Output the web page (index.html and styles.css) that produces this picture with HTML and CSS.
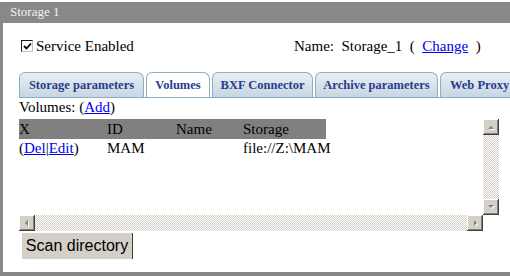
FILE: index.html
```html
<!DOCTYPE html>
<html>
<head>
<meta charset="utf-8">
<link rel="stylesheet" href="styles.css">
</head>
<body>
<div class="panel">
  <div class="titlebar">Storage 1</div>
  <div class="content">
    <div class="toprow">
      <div class="svc"><span class="cb"><svg width="9" height="9" viewBox="0 0 9 9"><path d="M1 4 L3.5 6.5 L8 1.5" fill="none" stroke="#000" stroke-width="1.8"/></svg></span>Service Enabled</div>
      <div class="name">Name:&nbsp; Storage_1&nbsp; (&nbsp; <a href="#">Change</a>&nbsp; )</div>
    </div>
    <div class="tabs">
      <div class="tab t1">Storage parameters</div>
      <div class="tab t2 active">Volumes</div>
      <div class="tab t3">BXF Connector</div>
      <div class="tab t4">Archive parameters</div>
      <div class="tab t5">Web Proxy</div>
    </div>
    <div class="vol">Volumes: (<a href="#">Add</a>)</div>
    <div class="scroller">
      <div class="view">
        <table class="grid">
          <colgroup><col class="c1"><col class="c2"><col class="c3"><col class="c4"></colgroup>
          <tr class="head"><td>X</td><td>ID</td><td>Name</td><td>Storage</td></tr>
          <tr><td>(<a href="#">Del</a>|<a href="#">Edit</a>)</td><td>MAM</td><td></td><td>file://Z:\MAM</td></tr>
        </table>
      </div>
      <div class="vbar">
        <div class="sbtn"><svg width="16" height="16" viewBox="0 0 16 16"><polygon points="5,10 11,10 8,7" fill="#fff" transform="translate(1,1)"/><polygon points="5,10 11,10 8,7" fill="#808080"/></svg></div>
        <div class="track"></div>
        <div class="sbtn"><svg width="16" height="16" viewBox="0 0 16 16"><polygon points="5,6 11,6 8,9" fill="#fff" transform="translate(1,1)"/><polygon points="5,6 11,6 8,9" fill="#808080"/></svg></div>
      </div>
      <div class="hbar">
        <div class="sbtn"><svg width="16" height="16" viewBox="0 0 16 16"><polygon points="9,5 9,11 6,8" fill="#fff" transform="translate(1,1)"/><polygon points="9,5 9,11 6,8" fill="#808080"/></svg></div>
        <div class="track"></div>
        <div class="sbtn"><svg width="16" height="16" viewBox="0 0 16 16"><polygon points="7,5 7,11 10,8" fill="#fff" transform="translate(1,1)"/><polygon points="7,5 7,11 10,8" fill="#808080"/></svg></div>
      </div>
      <div class="corner"></div>
    </div>
    <button class="scan">Scan directory</button>
  </div>
</div>
</body>
</html>
```

FILE: styles.css
```css
html, body {
  margin: 0;
  padding: 0;
  background: #fff;
}
body {
  padding-top: 2px;
  font-family: "Liberation Serif", "Times New Roman", serif;
  font-size: 15px;
  color: #000;
  overflow: hidden;
}
a {
  color: #0000ee;
  text-decoration: underline;
}
.panel {
  width: 507px;
  height: 270px;
  border-left: 3px solid #878787;
  border-bottom: 4px solid #878787;
  display: flex;
  flex-direction: column;
  overflow: hidden;
}
.titlebar {
  flex: none;
  height: 21px;
  background: #888888;
  color: #f2f2f2;
  font-size: 13px;
  line-height: 20px;
  padding-left: 7px;
}
.content {
  padding-left: 16px;
  display: flex;
  flex-direction: column;
  align-items: flex-start;
}
.toprow {
  margin-top: 14px;
  display: grid;
  grid-template-columns: 275px auto;
  line-height: 18px;
  height: 18px;
}
.svc {
  display: flex;
  align-items: center;
}
.cb {
  box-sizing: border-box;
  width: 12px;
  height: 12px;
  margin: 0 3px 0 2px;
  border: 1px solid #1a1a1a;
  border-right-color: #c0c0c0;
  border-bottom-color: #c0c0c0;
  background: #fff;
  display: flex;
  align-items: center;
  justify-content: center;
}
.cb svg { display: block; }
.tabs {
  margin-top: 17px;
  display: flex;
  gap: 2px;
  width: 491px;
  height: 26px;
  border-bottom: 1px solid #8eaec6;
  box-sizing: border-box;
  overflow: hidden;
}
.tab {
  box-sizing: border-box;
  flex: none;
  height: 25px;
  padding: 0;
  border: 1px solid #8eaec6;
  border-bottom: none;
  border-radius: 6px 7px 0 0;
  background: linear-gradient(#e9eff4, #c6d6e3);
  color: #2a3b8c;
  font-weight: bold;
  font-size: 12.5px;
  line-height: 24px;
  text-align: center;
  white-space: nowrap;
  overflow: hidden;
}
.t1 { width: 125px; }
.t2 { width: 64px; }
.t3 { width: 101px; }
.t4 { width: 123px; }
.t5 { width: 90px; text-align: left; padding-left: 9px; }
.tab.active {
  background: #fff;
}
.vol {
  line-height: 18px;
}
.scroller {
  margin-top: 3px;
  display: grid;
  grid-template-columns: 464px 16px;
  grid-template-rows: 96px 16px;
}
.view {
  overflow: hidden;
}
.grid {
  border-collapse: collapse;
  table-layout: fixed;
  width: 307px;
}
.grid td {
  padding: 0;
  line-height: 18px;
  white-space: nowrap;
}
.grid .head td {
  background: #808080;
  line-height: 20px;
}
.c1 { width: 88px; }
.c2 { width: 69px; }
.c3 { width: 67px; }
.c4 { width: 83px; }
.vbar {
  display: flex;
  flex-direction: column;
}
.hbar {
  display: flex;
}
.track {
  flex: 1;
  background: repeating-conic-gradient(#d4d0c8 0 25%, #ffffff 0 50%) 0 0 / 2px 2px;
}
.sbtn {
  width: 16px;
  height: 16px;
  flex: none;
  background: #d4d0c8;
  box-shadow: inset -1px -1px #404040, inset 1px 1px #ffffff, inset -2px -2px #808080;
}
.sbtn svg { display: block; }
.corner {
  background: #fff;
}
.scan {
  margin: 2px 0 0 3px;
  width: 111px;
  height: 26px;
  padding: 0;
  border: none;
  border-right: 1px solid #404040;
  background: #d4d0c8;
  font-family: "Liberation Sans", Arial, sans-serif;
  font-size: 16px;
  color: #000;
  text-align: center;
}
```
